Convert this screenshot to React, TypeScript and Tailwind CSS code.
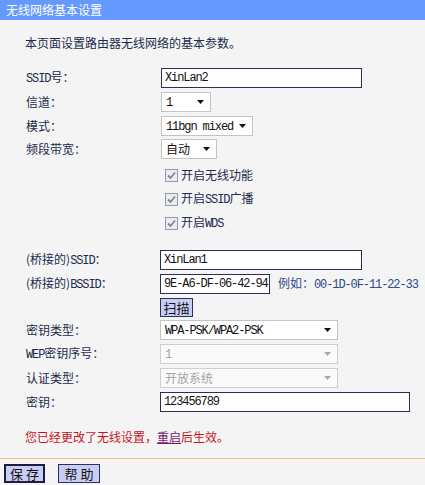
import React from 'react';

// latin text in the old router UI is a narrow fixed-width face
const mono = "font-['Liberation_Mono',monospace] text-[12px] tracking-[-1.1px]";

const M = ({ children }: { children: React.ReactNode }) => <span className={mono}>{children}</span>;

const Arrow = ({ disabled }: { disabled?: boolean }) => (
  <svg width="7" height="4" viewBox="0 0 7 4">
    <polygon points="0,0 7,0 3.5,4" fill={disabled ? '#a8a8a8' : '#111111'} />
  </svg>
);

const Select = ({
  className,
  children,
  disabled,
}: {
  className: string;
  children: React.ReactNode;
  disabled?: boolean;
}) => (
  <div
    className={
      'flex h-[20px] items-center justify-between border pl-[4px] pr-[6px] ' +
      (disabled ? 'border-[#cfcfcf] bg-[#fafafa] text-[#a4a4a4] ' : 'border-[#c4c4c4] bg-white text-[#111] ') +
      className
    }
  >
    <span className="leading-none">{children}</span>
    <Arrow disabled={disabled} />
  </div>
);

const Input = ({ className, children }: { className: string; children: React.ReactNode }) => (
  <div className={'flex h-[20px] items-center border border-[#283150] bg-white pl-[3px] text-[#111] ' + className}>
    {children}
  </div>
);

const Check = ({ children }: { children: React.ReactNode }) => (
  <div className="flex h-[24px] items-center pl-[165px]">
    <div className="flex h-[13px] w-[13px] items-center justify-center border border-[#8d9cb6] bg-[#ececec]">
      <svg width="9" height="9" viewBox="0 0 9 9">
        <path d="M1 4.5 L3.5 7 L8 1.5" stroke="#7c8698" strokeWidth="1.8" fill="none" />
      </svg>
    </div>
    <span className="ml-[3px]">{children}</span>
  </div>
);

const Row = ({ label, h = 'h-[24px]', children }: { label: React.ReactNode; h?: string; children: React.ReactNode }) => (
  <div className={'flex items-center pl-[26px] ' + h}>
    <div className="w-[134px] shrink-0">{label}</div>
    {children}
  </div>
);

export default function App() {
  return (
    <div className="h-[485px] w-[425px] overflow-hidden bg-[#f4f4f4] font-['Noto_Sans_CJK_SC',sans-serif] text-[12px] text-[#1d2b4d]">
      <div className="h-[20px] bg-[#6699ff] pl-[6px] text-[12px] leading-[20px] text-white">无线网络基本设置</div>

      <div className="mt-[15px] h-[16px] pl-[25px] leading-[16px]">本页面设置路由器无线网络的基本参数。</div>

      <div className="mt-[15px]">
        <Row label={<><M>SSID</M>号：</>}>
          <Input className="ml-[1px] w-[201px]">
            <M>XinLan2</M>
          </Input>
        </Row>
        <Row label="信道：">
          <Select className="ml-[1px] w-[50px]">
            <M>1</M>
          </Select>
        </Row>
        <Row label="模式：" h="h-[23px]">
          <Select className="ml-[1px] w-[92px]">
            <M>11bgn mixed</M>
          </Select>
        </Row>
        <Row label="频段带宽：" h="h-[23px]">
          <Select className="ml-[1px] w-[56px]">自动</Select>
        </Row>
      </div>

      <div className="mt-[3px]">
        <Check>开启无线功能</Check>
        <Check>
          开启<M>SSID</M>广播
        </Check>
        <Check>
          开启<M>WDS</M>
        </Check>
      </div>

      <div className="mt-[13px]">
        <Row label={<>(桥接的)<M>SSID</M>：</>}>
          <Input className="w-[202px]">
            <M>XinLan1</M>
          </Input>
        </Row>
        <Row label={<>(桥接的)<M>BSSID</M>：</>}>
          <Input className="w-[110px]">
            <M>9E-A6-DF-06-42-94</M>
          </Input>
          <span className="ml-[8px] text-[#2a4a8c]">
            例如：<M>00-1D-0F-11-22-33</M>
          </span>
        </Row>
        <Row label="" h="h-[22px]">
          <button className="h-[19px] w-[33px] border border-[#2b2f5c] bg-[#c9cdf5] text-[13px] leading-none text-[#111]">
            扫描
          </button>
        </Row>
        <Row label="密钥类型：">
          <Select className="w-[178px]">
            <M>WPA-PSK/WPA2-PSK</M>
          </Select>
        </Row>
        <Row label={<><M>WEP</M>密钥序号：</>}>
          <Select className="w-[178px]" disabled>
            <M>1</M>
          </Select>
        </Row>
        <Row label="认证类型：">
          <Select className="w-[178px]" disabled>
            开放系统
          </Select>
        </Row>
        <Row label="密钥：">
          <Input className="w-[250px]">
            <M>123456789</M>
          </Input>
        </Row>
      </div>

      <div className="mt-[15px] h-[16px] pl-[25px] leading-[16px] text-[#c8141e]">
        您已经更改了无线设置，<span className="text-[#7a1a6e] underline">重启</span>后生效。
      </div>

      <div className="mt-[13px] h-px bg-[#efbf8c]" />

      <div className="mt-[5px] flex gap-[13px] pl-[4px]">
        <button className="h-[19px] w-[41px] border-2 border-[#1b1d45] bg-[#c9cdf5] text-[13px] leading-none text-[#111]">
          保 存
        </button>
        <button className="h-[19px] w-[42px] border border-[#2b2f5c] bg-[#c9cdf5] text-[13px] leading-none text-[#111]">
          帮 助
        </button>
      </div>
    </div>
  );
}
